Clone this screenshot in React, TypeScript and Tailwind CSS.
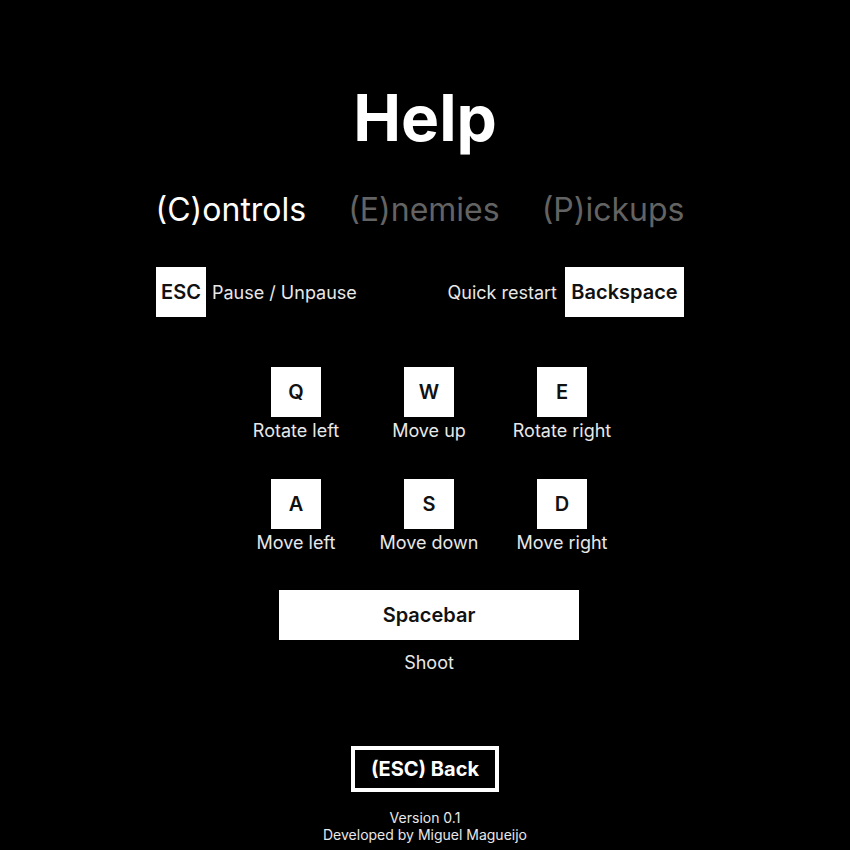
import React from "react";

const Key = ({ k, label }: { k: string; label: string }) => (
  <div className="flex flex-col items-center w-[133px]">
    <div className="w-[50px] h-[50px] bg-white text-[#111] flex items-center justify-center text-[20px] font-semibold leading-none">
      {k}
    </div>
    <div className="pt-[2px] text-[18px] leading-6 text-[#e8e8e8] whitespace-nowrap">{label}</div>
  </div>
);

export default function App() {
  return (
    <div
      className="w-[850px] h-[850px] bg-black flex flex-col items-center text-white overflow-hidden"
      style={{ fontFamily: "Inter, 'Noto Sans', sans-serif" }}
    >
      <h1 className="mt-[86px] text-[64px] font-bold leading-none">Help</h1>

      <div className="mt-[44px] flex gap-[42px] text-[32px] leading-[32px] mr-[10px]">
        <span className="text-white">(C)ontrols</span>
        <span className="text-[#636363]">(E)nemies</span>
        <span className="text-[#636363]">(P)ickups</span>
      </div>

      <div className="mt-[41px] w-[528px] mr-[10px] flex justify-between items-center">
        <div className="flex items-center gap-[6px]">
          <div className="w-[50px] h-[50px] bg-white text-[#111] flex items-center justify-center text-[20px] font-semibold">
            ESC
          </div>
          <span className="text-[18px] text-[#e8e8e8]">Pause / Unpause</span>
        </div>
        <div className="flex items-center gap-[8px]">
          <span className="text-[18px] text-[#e8e8e8]">Quick restart</span>
          <div className="w-[119px] h-[50px] bg-white text-[#111] flex items-center justify-center text-[20px] font-semibold">
            Backspace
          </div>
        </div>
      </div>

      <div className="mt-[50px] ml-[8px] flex">
        <Key k="Q" label="Rotate left" />
        <Key k="W" label="Move up" />
        <Key k="E" label="Rotate right" />
      </div>
      <div className="mt-[36px] ml-[8px] flex">
        <Key k="A" label="Move left" />
        <Key k="S" label="Move down" />
        <Key k="D" label="Move right" />
      </div>

      <div className="mt-[35px] ml-[8px] flex flex-col items-center">
        <div className="w-[300px] h-[50px] bg-white text-[#111] flex items-center justify-center text-[20px] font-semibold">
          Spacebar
        </div>
        <div className="mt-[11px] text-[18px] leading-6 text-[#e8e8e8]">Shoot</div>
      </div>

      <div className="mt-[71px] w-[148px] h-[46px] border-4 border-white flex items-center justify-center text-[20px] font-bold">
        (ESC) Back
      </div>

      <div className="mt-[17px] flex flex-col items-center text-[14px] leading-[17px] text-[#e8e8e8]">
        <span>Version 0.1</span>
        <span>Developed by Miguel Magueijo</span>
      </div>
    </div>
  );
}
